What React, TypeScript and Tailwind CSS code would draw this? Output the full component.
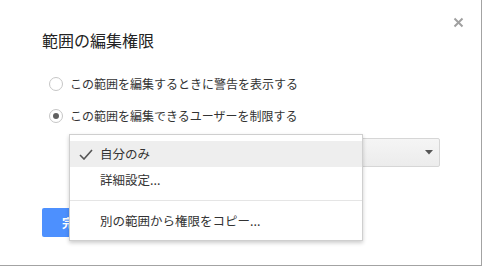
import React from 'react';

const font = { fontFamily: '"Noto Sans CJK JP", "Noto Sans", sans-serif' };

function Radio({ checked }: { checked?: boolean }) {
  return (
    <span className="flex h-[14px] w-[14px] items-center justify-center rounded-full border border-[#c6c6c6] bg-white">
      {checked && <span className="h-[6px] w-[6px] rounded-full bg-[#606060]" />}
    </span>
  );
}

export default function App() {
  return (
    <div className="h-[268px] w-[483px] bg-white text-[#222]" style={font}>
      <div className="relative h-[266px] w-[482px] border-r border-b border-[#a3a3a3] pl-[42px] pt-[29px]">
        {/* close */}
        <button className="absolute right-[17px] top-[17px] text-[#a0a0a0]">
          <svg width="11" height="11" viewBox="0 0 11 11">
            <path d="M1.5 1.5 L9.5 9.5 M9.5 1.5 L1.5 9.5" stroke="currentColor" strokeWidth="2" />
          </svg>
        </button>

        <h2 className="text-[16px] leading-[22px] text-[#222]">範囲の編集権限</h2>

        <div className="mt-[26px] flex flex-col gap-[18px] pl-[7px] text-[12px] leading-[14px] text-[#333]">
          <label className="flex h-[14px] items-center gap-[7px]">
            <Radio />
            <span>この範囲を編集するときに警告を表示する</span>
          </label>
          <label className="flex h-[14px] items-center gap-[7px]">
            <Radio checked />
            <span>この範囲を編集できるユーザーを制限する</span>
          </label>
        </div>

        {/* select */}
        <div className="ml-[28px] mt-[15px] flex h-[29px] w-[370px] items-center justify-end rounded-[2px] border border-[#d6d6d6] bg-gradient-to-b from-[#f5f5f5] to-[#ececec] pr-[6px]">
          <svg width="8" height="5" viewBox="0 0 8 5">
            <path d="M0 0 L8 0 L4 4.5 Z" fill="#555" />
          </svg>
        </div>

        {/* button */}
        <button className="mt-[41px] h-[29px] w-[64px] rounded-[2px] bg-[#4d90fe] text-[12px] font-bold text-white">
          完了
        </button>

        {/* dropdown menu */}
        <div className="absolute left-[69px] top-[134px] w-[294px] border border-[#cfcfcf] bg-white py-[6px] text-[12.5px] text-[#333] shadow-[0_2px_4px_rgba(0,0,0,0.2)]">
          <div className="flex h-[26px] items-center bg-[#eeeeee]">
            <span className="flex w-[30px] justify-center pl-[2px]">
              <svg width="14" height="11" viewBox="0 0 14 11">
                <path d="M1 6 L5 10 L13 1" stroke="#555" strokeWidth="1.6" fill="none" />
              </svg>
            </span>
            <span>自分のみ</span>
          </div>
          <div className="flex h-[26px] items-center pl-[30px]">詳細設定...</div>
          <div className="my-[7px] border-t border-[#e5e5e5]" />
          <div className="flex h-[26px] items-center pl-[30px]">別の範囲から権限をコピー...</div>
        </div>
      </div>
    </div>
  );
}
